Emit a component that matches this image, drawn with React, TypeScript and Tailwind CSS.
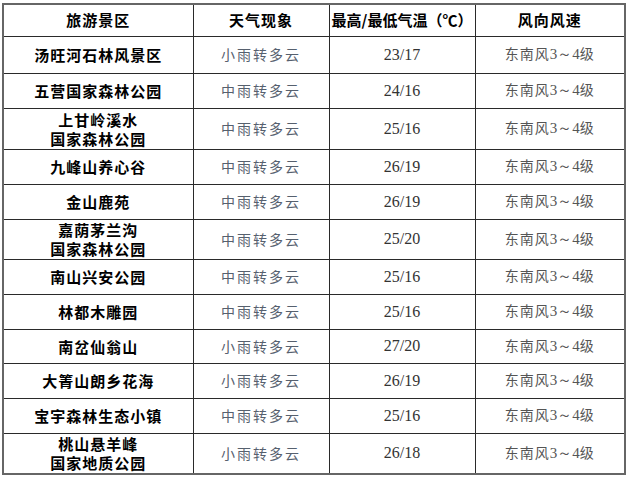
const rows: { name: string[]; weather: string; temp: string; h: string }[] = [
  { name: ['汤旺河石林风景区'], weather: '小雨转多云', temp: '23/17', h: 'h-[37px]' },
  { name: ['五营国家森林公园'], weather: '中雨转多云', temp: '24/16', h: 'h-[35px]' },
  { name: ['上甘岭溪水', '国家森林公园'], weather: '中雨转多云', temp: '25/16', h: 'h-[41px]' },
  { name: ['九峰山养心谷'], weather: '中雨转多云', temp: '26/19', h: 'h-[35px]' },
  { name: ['金山鹿苑'], weather: '中雨转多云', temp: '26/19', h: 'h-[35px]' },
  { name: ['嘉荫茅兰沟', '国家森林公园'], weather: '中雨转多云', temp: '25/20', h: 'h-[40px]' },
  { name: ['南山兴安公园'], weather: '中雨转多云', temp: '25/16', h: 'h-[35px]' },
  { name: ['林都木雕园'], weather: '中雨转多云', temp: '25/16', h: 'h-[35px]' },
  { name: ['南岔仙翁山'], weather: '小雨转多云', temp: '27/20', h: 'h-[34px]' },
  { name: ['大箐山朗乡花海'], weather: '小雨转多云', temp: '26/19', h: 'h-[35px]' },
  { name: ['宝宇森林生态小镇'], weather: '中雨转多云', temp: '25/16', h: 'h-[35px]' },
  { name: ['桃山悬羊峰', '国家地质公园'], weather: '小雨转多云', temp: '26/18', h: 'h-[41px]' },
];

const cell = 'border-[1.5px] border-[#2a2a2a] text-center align-middle p-0';

export default function App() {
  return (
    <div className="w-[626px] h-[479px] bg-white pl-[2px] pt-[3px] font-['Noto_Sans_CJK_SC',sans-serif]">
      <table className="w-[622px] border-collapse table-fixed border-[2px] border-[#666]">
        <colgroup>
          <col className="w-[190px]" />
          <col className="w-[136px]" />
          <col className="w-[146px]" />
          <col className="w-[150px]" />
        </colgroup>
        <thead>
          <tr className="h-[32px]">
            <th className={`${cell} text-[15px] font-bold text-black tracking-[1px]`}>旅游景区</th>
            <th className={`${cell} text-[15px] font-bold text-black tracking-[1px]`}>天气现象</th>
            <th className={`${cell} text-[15px] font-bold text-black`}>最高/最低气温（℃）</th>
            <th className={`${cell} text-[15px] font-bold text-black tracking-[1px]`}>风向风速</th>
          </tr>
        </thead>
        <tbody>
          {rows.map((r, i) => (
            <tr key={i} className={r.h}>
              <td className={`${cell} text-[15px] font-bold text-black leading-[19px] tracking-[1px]`}>
                {r.name.map((n) => (
                  <div key={n}>{n}</div>
                ))}
              </td>
              <td className={`${cell} text-[14px] font-normal text-[#56606e] tracking-[2px]`}>{r.weather}</td>
              <td className={`${cell} text-[16px] text-[#333] font-['Liberation_Serif',serif]`}>{r.temp}</td>
              <td className={`${cell} text-[14px] font-normal text-[#555] tracking-[1px]`}>
                东南风<span className="font-['Liberation_Serif',serif] text-[15px] tracking-normal">3～4</span>级
              </td>
            </tr>
          ))}
        </tbody>
      </table>
    </div>
  );
}
